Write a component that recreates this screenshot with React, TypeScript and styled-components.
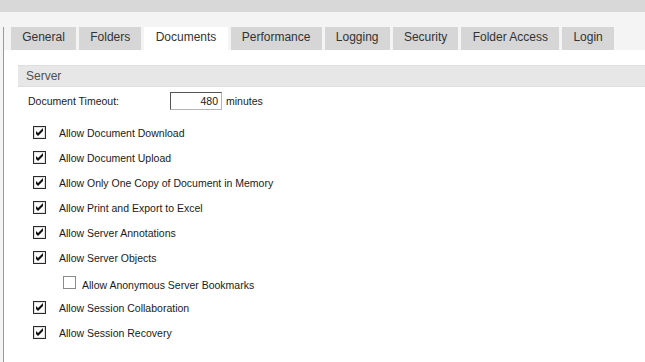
import React from "react";
import styled, { createGlobalStyle } from "styled-components";

const Global = createGlobalStyle`
  html, body { margin: 0; padding: 0; background: #f4f4f4; overflow: hidden; }
  body { font-family: "Liberation Sans", Arial, sans-serif; }
`;

const Page = styled.div`
  width: 645px;
  height: 362px;
  display: flex;
  flex-direction: column;
  background: #f4f4f4;
  overflow: hidden;
`;

const TopBar = styled.div`
  height: 12px;
  background: #d8d8d8;
  flex: none;
`;

const Panel = styled.div`
  margin: 15px 0 0 3px;
  border-left: 1px solid #9a9a9a;
  flex: 1;
  display: flex;
  flex-direction: column;
`;

const TabStrip = styled.div`
  display: flex;
  gap: 3px;
  padding-left: 7px;
  height: 23px;
  flex: none;
`;

const Tab = styled.div<{ $active?: boolean }>`
  display: flex;
  align-items: center;
  padding: 0 11.2px 3px;
  font-size: 12px;
  color: #333;
  background: ${(p) => (p.$active ? "#ffffff" : "#d6d6d6")};
  white-space: nowrap;
`;

const Content = styled.div`
  flex: 1;
  background: #ffffff;
  padding-top: 15px;
  font-size: 10.5px;
  color: #1a1a1a;
`;

const SectionHeader = styled.div`
  margin-left: 14px;
  height: 20px;
  border-top: 1px solid #dedede;
  border-bottom: 1px solid #dedede;
  background: #e7e7e7;
  display: flex;
  align-items: center;
  padding-left: 8px;
  font-size: 12px;
  color: #505050;
`;

const FieldRow = styled.div`
  display: flex;
  align-items: center;
  height: 18px;
  margin-top: 5px;
  padding-left: 24px;
`;

const FieldLabel = styled.span`
  width: 142px;
  flex: none;
`;

const NumberBox = styled.input`
  box-sizing: border-box;
  width: 52px;
  height: 18px;
  margin: 0;
  padding: 0 3px 0 2px;
  text-align: right;
  font-family: "Liberation Sans", Arial, sans-serif;
  font-size: 10.5px;
  color: #1a1a1a;
  background: #fff;
  border-style: solid;
  border-width: 1px;
  border-color: #555 #b5b5b5 #b5b5b5 #555;
  outline: none;
`;

const Unit = styled.span`
  margin-left: 4px;
`;

const CheckList = styled.div`
  margin-top: 10px;
  display: flex;
  flex-direction: column;
`;

const CheckRow = styled.div<{ $indent?: boolean }>`
  display: flex;
  align-items: center;
  height: 25px;
  padding-left: ${(p) => (p.$indent ? "59px" : "29px")};
  gap: ${(p) => (p.$indent ? "6px" : "13px")};
`;

const CheckLabel = styled.span<{ $indent?: boolean }>`
  position: relative;
  top: ${(p) => (p.$indent ? "2px" : "0")};
`;

const BoxWrap = styled.span`
  display: inline-flex;
  width: 13px;
  height: 13px;
  flex: none;
`;

function CheckBox({ checked }: { checked: boolean }) {
  return (
    <BoxWrap>
      <svg width="13" height="13" viewBox="0 0 13 13">
        <rect
          x="0.5"
          y="0.5"
          width="12"
          height="12"
          fill="#fff"
          stroke={checked ? "#2b2b2b" : "#8a8a8a"}
        />
        {checked && (
          <>
            <rect x="1.5" y="1.5" width="10" height="10" fill="none" stroke="#e2e2e2" />
            <path d="M3 5 L5 7 L10 2 L10 5 L5 10 L3 8 Z" fill="#111" />
          </>
        )}
      </svg>
    </BoxWrap>
  );
}

const tabs = [
  "General",
  "Folders",
  "Documents",
  "Performance",
  "Logging",
  "Security",
  "Folder Access",
  "Login",
];

const options: { label: string; checked: boolean; indent?: boolean }[] = [
  { label: "Allow Document Download", checked: true },
  { label: "Allow Document Upload", checked: true },
  { label: "Allow Only One Copy of Document in Memory", checked: true },
  { label: "Allow Print and Export to Excel", checked: true },
  { label: "Allow Server Annotations", checked: true },
  { label: "Allow Server Objects", checked: true },
  { label: "Allow Anonymous Server Bookmarks", checked: false, indent: true },
  { label: "Allow Session Collaboration", checked: true },
  { label: "Allow Session Recovery", checked: true },
];

export default function App() {
  return (
    <>
      <Global />
      <Page>
        <TopBar />
        <Panel>
          <TabStrip>
            {tabs.map((t) => (
              <Tab key={t} $active={t === "Documents"}>
                {t}
              </Tab>
            ))}
          </TabStrip>
          <Content>
            <SectionHeader>Server</SectionHeader>
            <FieldRow>
              <FieldLabel>Document Timeout:</FieldLabel>
              <NumberBox type="text" defaultValue="480" readOnly />
              <Unit>minutes</Unit>
            </FieldRow>
            <CheckList>
              {options.map((o) => (
                <CheckRow key={o.label} $indent={o.indent}>
                  <CheckBox checked={o.checked} />
                  <CheckLabel $indent={o.indent}>{o.label}</CheckLabel>
                </CheckRow>
              ))}
            </CheckList>
          </Content>
        </Panel>
      </Page>
    </>
  );
}
